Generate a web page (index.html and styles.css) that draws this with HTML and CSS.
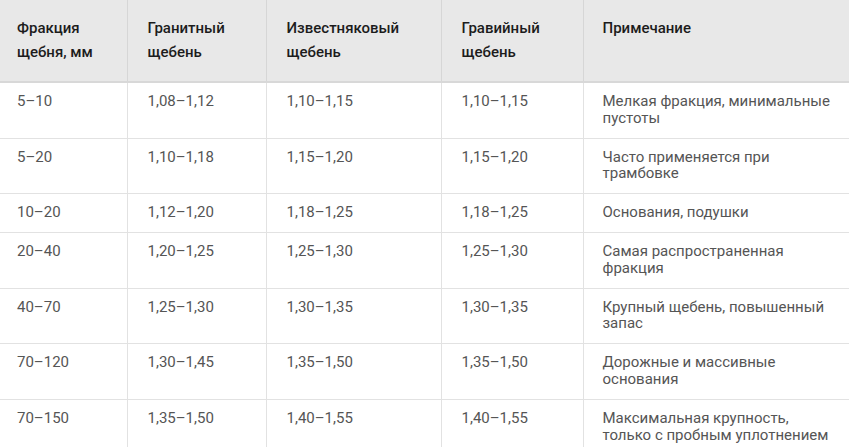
FILE: index.html
```html
<!DOCTYPE html>
<html lang="ru">
<head>
<meta charset="utf-8">
<link rel="stylesheet" href="styles.css">
</head>
<body>
<table class="grid">
  <colgroup>
    <col class="c1"><col class="c2"><col class="c3"><col class="c4"><col class="c5">
  </colgroup>
  <thead>
    <tr>
      <th>Фракция щебня, мм</th>
      <th>Гранитный щебень</th>
      <th>Известняковый щебень</th>
      <th>Гравийный щебень</th>
      <th>Примечание</th>
    </tr>
  </thead>
  <tbody>
    <tr><td>5–10</td><td>1,08–1,12</td><td>1,10–1,15</td><td>1,10–1,15</td><td>Мелкая фракция, минимальные пустоты</td></tr>
    <tr><td>5–20</td><td>1,10–1,18</td><td>1,15–1,20</td><td>1,15–1,20</td><td>Часто применяется при трамбовке</td></tr>
    <tr><td>10–20</td><td>1,12–1,20</td><td>1,18–1,25</td><td>1,18–1,25</td><td>Основания, подушки</td></tr>
    <tr><td>20–40</td><td>1,20–1,25</td><td>1,25–1,30</td><td>1,25–1,30</td><td>Самая распространенная фракция</td></tr>
    <tr><td>40–70</td><td>1,25–1,30</td><td>1,30–1,35</td><td>1,30–1,35</td><td>Крупный щебень, повышенный запас</td></tr>
    <tr><td>70–120</td><td>1,30–1,45</td><td>1,35–1,50</td><td>1,35–1,50</td><td>Дорожные и массивные основания</td></tr>
    <tr><td>70–150</td><td>1,35–1,50</td><td>1,40–1,55</td><td>1,40–1,55</td><td>Максимальная крупность, только с пробным уплотнением</td></tr>
  </tbody>
</table>
</body>
</html>
```
FILE: styles.css
```css
html, body {
  margin: 0;
  padding: 0;
  background: #ffffff;
}
body {
  font-family: Roboto, "Liberation Sans", Arial, sans-serif;
  font-size: 15px;
}
.grid {
  width: 100%;
  border-collapse: collapse;
  table-layout: fixed;
}
.c1 { width: 127px; }
.c2 { width: 139px; }
.c3 { width: 175px; }
.c4 { width: 142px; }
.c5 { width: auto; }
.grid th {
  background: #e8e8e8;
  color: #1c1c1c;
  font-weight: 500;
  text-align: left;
  vertical-align: top;
  line-height: 24px;
  padding: 16px 20px 17px;
  border-left: 1px solid #d6d6d6;
  border-bottom: 2px solid #d8d8d8;
}
.grid td {
  color: #555555;
  vertical-align: top;
  line-height: 16.8px;
  padding: 10px 20px 11px;
  border-left: 1px solid #e2e2e2;
  border-bottom: 1px solid #e2e2e2;
}
.grid th:first-child,
.grid td:first-child {
  border-left: none;
  padding-left: 17px;
}
.grid th:last-child,
.grid td:last-child {
  padding-left: 19px;
  padding-right: 11px;
}
```
